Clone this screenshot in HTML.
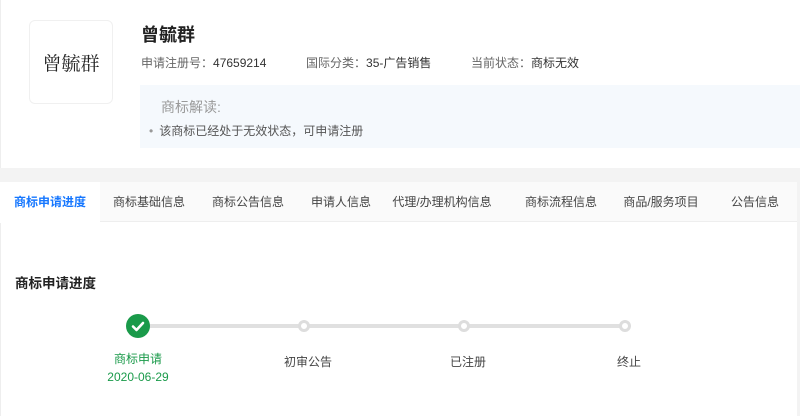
<!DOCTYPE html>
<html><head><meta charset="utf-8"><style>
*{margin:0;padding:0;box-sizing:border-box}
body{width:800px;height:416px;background:#fff;font-family:"Liberation Sans","Noto Sans CJK SC",sans-serif;position:relative;overflow:hidden;color:#333}
.a{position:absolute;white-space:nowrap}
.t{position:absolute;top:193px;width:160px;text-align:center;white-space:nowrap}
</style></head><body>
<div class="a" style="left:0;top:0;width:1px;height:416px;background:#eee"></div>
<div class="a" style="left:29px;top:20px;width:84px;height:84px;border:1px solid #f0f0f0;border-radius:6px;display:flex;align-items:center;justify-content:center;font-family:'Noto Serif CJK SC',serif;font-size:19px;color:#222">曾毓群</div>
<div class="a" style="left:141px;top:21px;font-size:18px;font-weight:bold;color:#222">曾毓群</div>
<div class="a" style="left:141px;top:54px;font-size:12px;color:#666">申请注册号：<span style="color:#333">47659214</span></div>
<div class="a" style="left:306px;top:54px;font-size:12px;color:#666">国际分类：<span style="color:#333">35-广告销售</span></div>
<div class="a" style="left:471px;top:54px;font-size:12px;color:#666">当前状态：<span style="color:#333">商标无效</span></div>
<div class="a" style="left:140px;top:85px;width:660px;height:63px;background:#f5f9fd"></div>
<div class="a" style="left:161px;top:97px;font-size:14px;color:#999">商标解读:</div>
<div class="a" style="left:149px;top:122px;font-size:12px;color:#555"><span style="color:#999;margin-right:6px">•</span>该商标已经处于无效状态，可申请注册</div>
<div class="a" style="left:0;top:168px;width:800px;height:14px;background:#f3f3f3"></div>
<div class="a" style="left:0;top:182px;width:797px;height:40px;background:#fafafa;border-bottom:1px solid #eee"></div>
<div class="a" style="left:0;top:182px;width:100px;height:41px;background:#fff"></div>
<div class="a" style="left:797px;top:168px;width:3px;height:248px;background:#f3f3f3"></div>
<div style="font-size:12px;color:#444">
<div class="t" style="left:-30px;color:#1677ff;font-weight:bold">商标申请进度</div>
<div class="t" style="left:69px">商标基础信息</div>
<div class="t" style="left:168px">商标公告信息</div>
<div class="t" style="left:261px">申请人信息</div>
<div class="t" style="left:362px">代理/办理机构信息</div>
<div class="t" style="left:481px">商标流程信息</div>
<div class="t" style="left:581px">商品/服务项目</div>
<div class="t" style="left:675px">公告信息</div>
</div>
<div class="a" style="left:15px;top:272px;font-size:13.5px;font-weight:bold;color:#222">商标申请进度</div>
<div class="a" style="left:138px;top:324px;width:487px;height:4px;background:#e0e0e0"></div>
<div class="a" style="left:126px;top:314px;width:24px;height:24px;border-radius:50%;background:#1a9a4a"></div>
<svg class="a" style="left:126px;top:314px" width="24" height="24"><path d="M7 12.5l3.5 3.5 6.5-7" stroke="#fff" stroke-width="2.6" fill="none" stroke-linecap="round" stroke-linejoin="round"/></svg>
<div class="a" style="left:298px;top:320px;width:12px;height:12px;border-radius:50%;background:#fff;border:3px solid #ddd"></div>
<div class="a" style="left:458px;top:320px;width:12px;height:12px;border-radius:50%;background:#fff;border:3px solid #ddd"></div>
<div class="a" style="left:619px;top:320px;width:12px;height:12px;border-radius:50%;background:#fff;border:3px solid #ddd"></div>
<div class="a" style="left:98px;top:350px;width:80px;text-align:center;font-size:12px;color:#1a9a4a">商标申请</div>
<div class="a" style="left:98px;top:370px;width:80px;text-align:center;font-size:12px;color:#1a9a4a">2020-06-29</div>
<div class="a" style="left:268px;top:353px;width:80px;text-align:center;font-size:12px;color:#444">初审公告</div>
<div class="a" style="left:428px;top:353px;width:80px;text-align:center;font-size:12px;color:#444">已注册</div>
<div class="a" style="left:589px;top:353px;width:80px;text-align:center;font-size:12px;color:#444">终止</div>
</body></html>
